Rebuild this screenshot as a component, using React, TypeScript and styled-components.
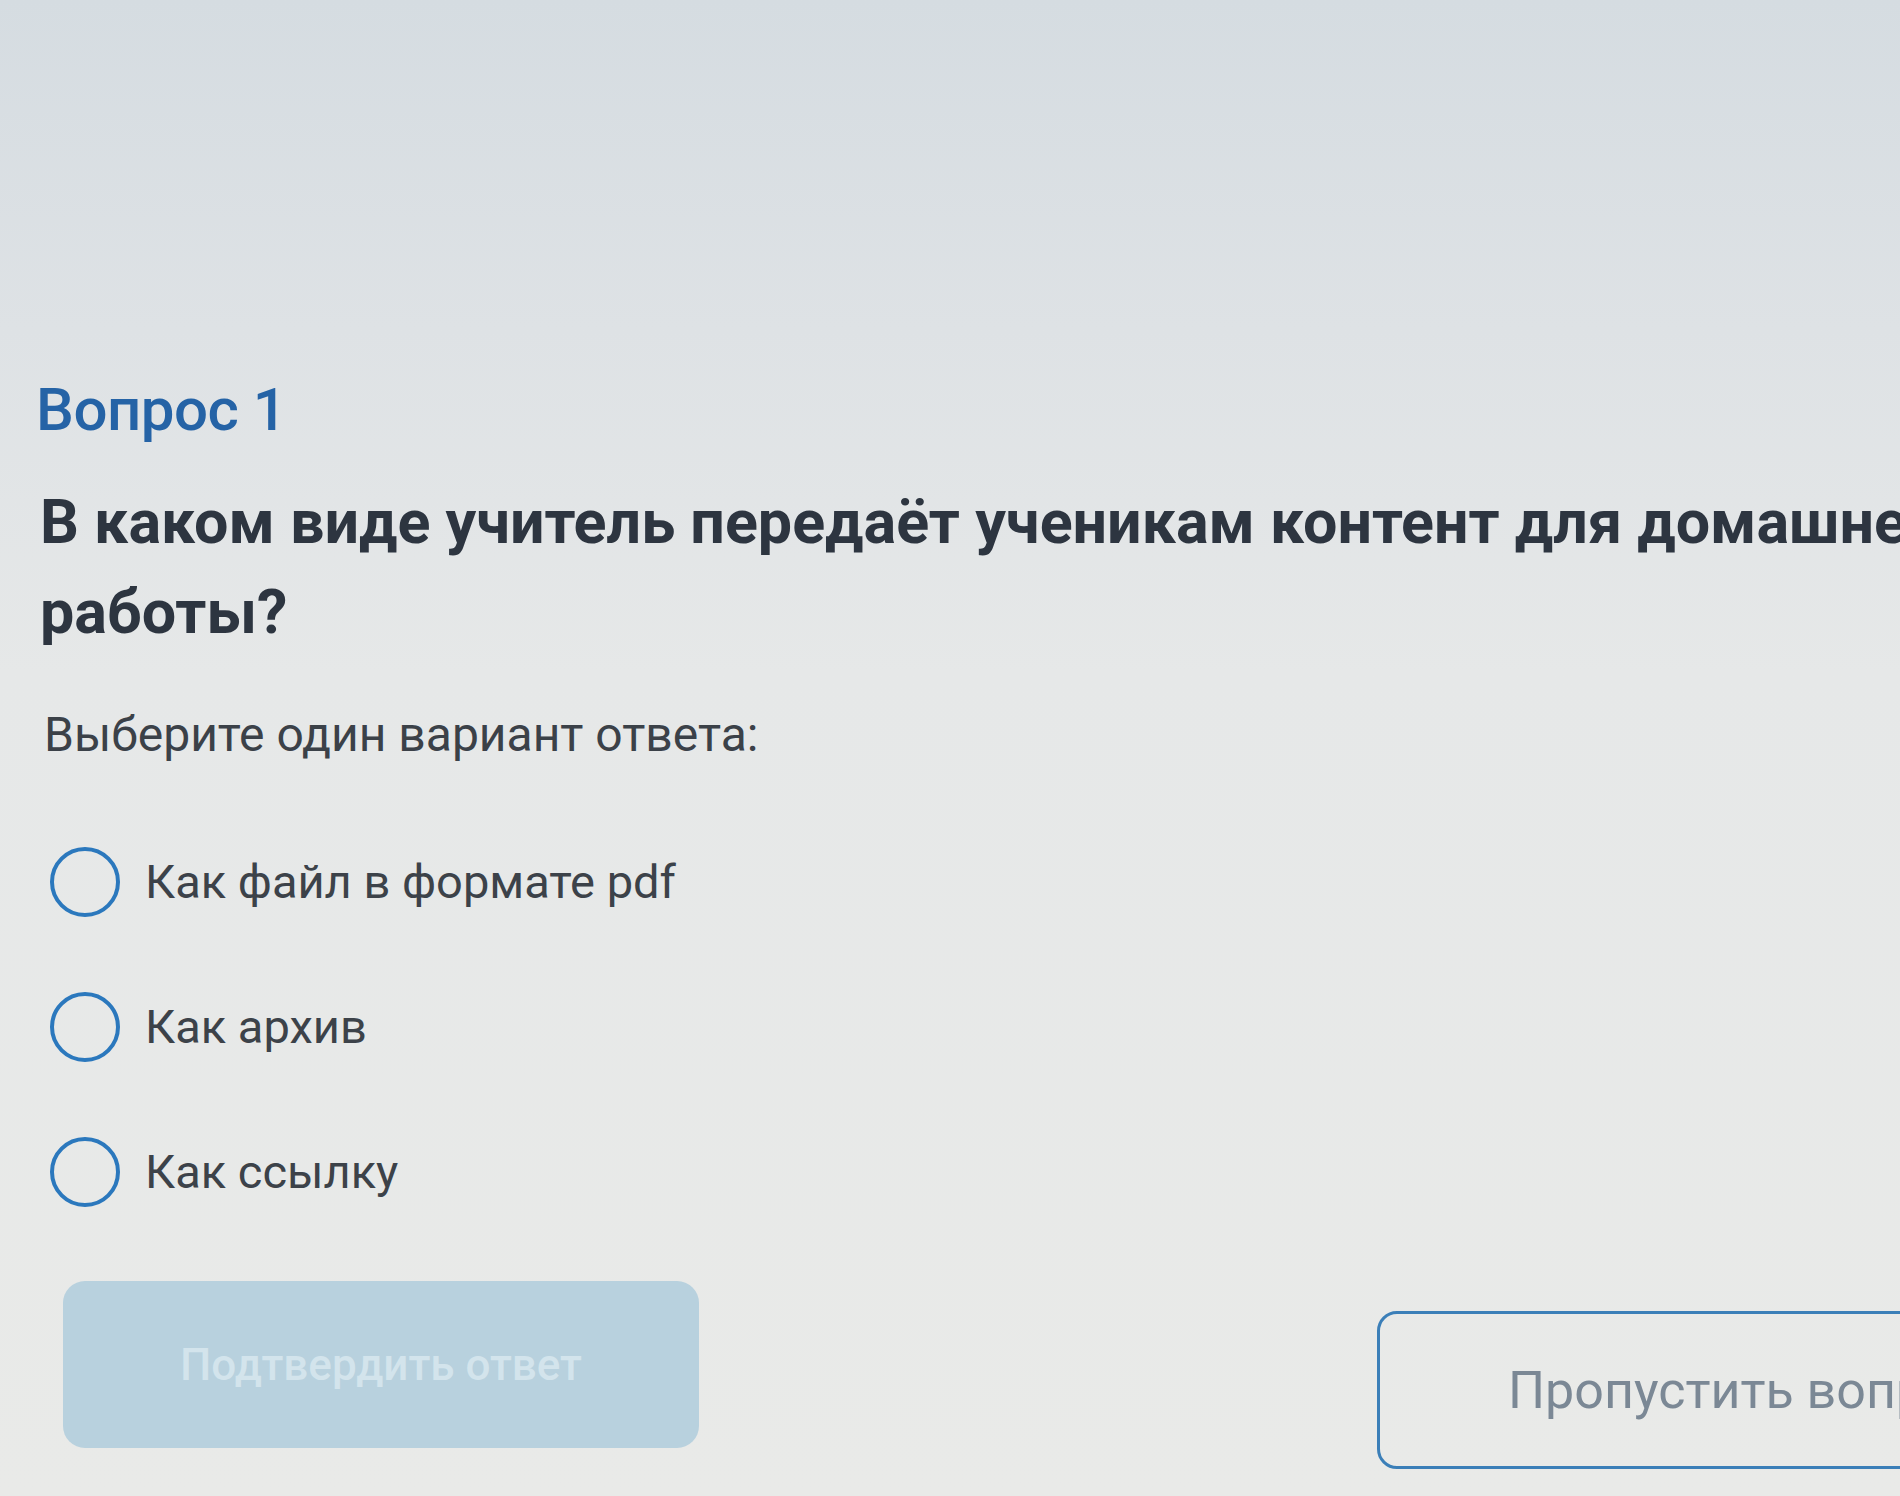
import React from "react";
import styled, { createGlobalStyle } from "styled-components";

const GlobalStyle = createGlobalStyle`
  html, body {
    margin: 0;
    padding: 0;
    width: 1900px;
    height: 1496px;
    overflow: hidden;
  }
  body {
    font-family: Roboto, "Noto Sans", "Liberation Sans", sans-serif;
    background: linear-gradient(180deg, #d5dce1 0%, #dee2e5 22%, #e6e8e8 45%, #e9eae8 100%);
  }
`;

const Page = styled.main`
  width: 2140px;
  height: 1496px;
  box-sizing: border-box;
  padding: 374px 0 0 36px;
  display: flex;
  flex-direction: column;
`;

const Title = styled.h2`
  margin: 0;
  font-size: 60px;
  line-height: 72px;
  font-weight: 500;
  color: #2563a6;
  letter-spacing: -0.5px;
`;

const Question = styled.h1`
  margin: 31px 0 0 4px;
  width: 2000px;
  font-size: 61px;
  line-height: 90px;
  font-weight: 700;
  color: #2d3540;
`;

const Prompt = styled.p`
  margin: 48px 0 0 8px;
  font-size: 48px;
  line-height: 60px;
  font-weight: 400;
  color: #3b4148;
`;

const Options = styled.div`
  margin: 81px 0 0 14px;
  display: flex;
  flex-direction: column;
  gap: 73px;
`;

const Option = styled.label`
  display: flex;
  align-items: center;
  gap: 25px;
  height: 72px;
  font-size: 47px;
  line-height: 72px;
  color: #3c4249;
  cursor: pointer;
`;

const Radio = styled.span`
  width: 70px;
  height: 70px;
  border-radius: 50%;
  border: 4px solid #2b78bd;
  box-sizing: border-box;
  flex: none;
`;

const Actions = styled.div`
  margin: 73px 0 0 27px;
  width: 2050px;
  display: flex;
  justify-content: space-between;
  align-items: flex-start;
`;

const ConfirmButton = styled.button`
  width: 636px;
  height: 167px;
  border: none;
  border-radius: 22px;
  background: #b8d1de;
  color: #d3e4ec;
  font-family: Roboto, "Noto Sans", sans-serif;
  font-size: 44px;
  font-weight: 500;
`;

const SkipButton = styled.button`
  margin-top: 30px;
  width: 736px;
  height: 158px;
  border: 3px solid #3b7fb8;
  border-radius: 20px;
  background: transparent;
  color: #7b8895;
  font-family: Roboto, "Noto Sans", sans-serif;
  font-size: 52px;
  font-weight: 400;
`;

const answers = ["Как файл в формате pdf", "Как архив", "Как ссылку"];

export default function App() {
  return (
    <>
      <GlobalStyle />
      <Page>
        <Title>Вопрос 1</Title>
        <Question>В каком виде учитель передаёт ученикам контент для домашней работы?</Question>
        <Prompt>Выберите один вариант ответа:</Prompt>
        <Options>
          {answers.map((a) => (
            <Option key={a}>
              <Radio />
              {a}
            </Option>
          ))}
        </Options>
        <Actions>
          <ConfirmButton disabled>Подтвердить ответ</ConfirmButton>
          <SkipButton>Пропустить вопрос</SkipButton>
        </Actions>
      </Page>
    </>
  );
}
